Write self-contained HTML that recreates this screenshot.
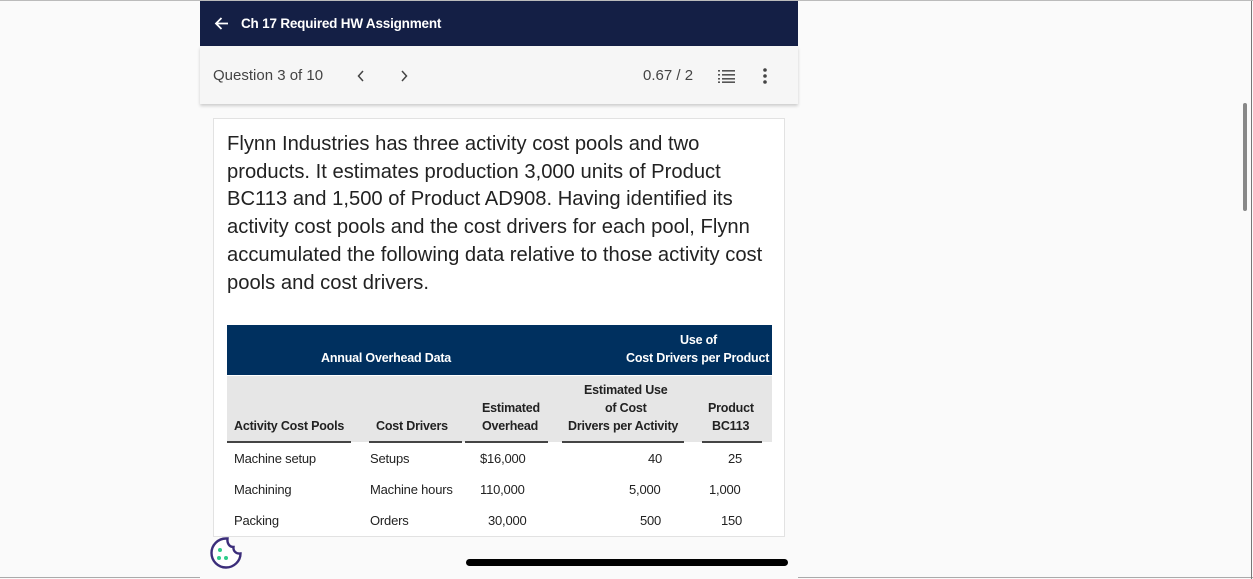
<!DOCTYPE html>
<html><head><style>
*{margin:0;padding:0;box-sizing:border-box}
body{width:1253px;height:578px;background:#fafafa;font-family:"Liberation Sans",sans-serif;position:relative;overflow:hidden;border-top:1px solid #bbb;border-bottom:1px solid #aaa}
.rb{position:absolute;right:1px;top:0;width:1px;height:578px;background:#777}
.sb{position:absolute;left:1243px;top:102px;width:4px;height:108px;background:#888;border-radius:2px}
.col{position:absolute;left:200px;top:0;width:598px;height:578px;background:#fafafa}
.hdr{position:absolute;left:0;top:0;width:598px;height:45px;background:#141f45;color:#fff;font-size:13.5px;font-weight:bold;letter-spacing:-0.2px}
.hdr span{position:absolute;left:41px;top:15px}
.tb{position:absolute;left:0;top:45px;width:598px;height:58px;background:#f6f6f6;box-shadow:0 2px 3px rgba(0,0,0,.18);color:#444;font-size:15px}
.card{position:absolute;left:13px;top:117px;width:572px;height:419px;background:#fff;border:1px solid #e2e2e2}
.p{position:absolute;left:13px;top:12px;width:560px;font-size:20.2px;line-height:27.7px;color:#222;letter-spacing:0;white-space:nowrap}
.t1{position:absolute;left:13px;top:206px;width:545px;height:50px;background:#00305f;color:#fff;font-size:12.5px;font-weight:bold;letter-spacing:-0.2px}
.t2{position:absolute;left:13px;top:257px;width:545px;height:66px;background:#e6e6e6;font-size:12.5px;font-weight:bold;color:#222;letter-spacing:-0.2px}
.a{position:absolute;white-space:nowrap}
.ul{position:absolute;top:65px;height:2px;background:#444}
.r{position:absolute;font-size:13px;color:#222;white-space:nowrap;letter-spacing:-0.2px}
</style></head><body>
<div class="rb"></div><div class="sb"></div>
<div class="col">
<div class="hdr"><svg style="position:absolute;left:14px;top:15px" width="15" height="15" viewBox="0 0 15 15"><path d="M14 7.5H2M7.5 2L2 7.5 7.5 13" stroke="#fff" stroke-width="1.8" fill="none"/></svg><span>Ch 17 Required HW Assignment</span></div>
<div class="tb">
<span class="a" style="left:13px;top:21px">Question 3 of 10</span>
<svg style="position:absolute;left:157px;top:24px" width="8" height="12"><path d="M6 1L1.5 6 6 11" stroke="#444" stroke-width="1.5" fill="none"/></svg>
<svg style="position:absolute;left:200px;top:24px" width="8" height="12"><path d="M2 1L6.5 6 2 11" stroke="#444" stroke-width="1.5" fill="none"/></svg>
<span class="a" style="left:443px;top:21px">0.67 / 2</span>
<svg style="position:absolute;left:518px;top:23px" width="17" height="14"><g fill="#555"><rect x="0" y="1" width="2" height="1.6"/><rect x="4" y="1" width="13" height="1.6"/><rect x="0" y="5" width="2" height="1.6"/><rect x="4" y="5" width="13" height="1.6"/><rect x="0" y="9" width="2" height="1.6"/><rect x="4" y="9" width="13" height="1.6"/><rect x="0" y="12.4" width="2" height="1.6"/><rect x="4" y="12.4" width="13" height="1.6"/></g></svg>
<svg style="position:absolute;left:563px;top:22px" width="4" height="16"><g fill="#444"><circle cx="2" cy="2" r="1.8"/><circle cx="2" cy="8" r="1.8"/><circle cx="2" cy="14" r="1.8"/></g></svg>
</div>
<div class="card">
<div class="p">Flynn Industries has three activity cost pools and two<br>products. It estimates production 3,000 units of Product<br>BC113 and 1,500 of Product AD908. Having identified its<br>activity cost pools and the cost drivers for each pool, Flynn<br>accumulated the following data relative to those activity cost<br>pools and cost drivers.</div>
<div class="t1"><span class="a" style="left:94px;top:26px">Annual Overhead Data</span><span class="a" style="left:453px;top:8px">Use of</span><span class="a" style="left:399px;top:26px">Cost Drivers per Product</span></div>
<div class="t2">
<span class="a" style="left:7px;top:43px">Activity Cost Pools</span>
<span class="a" style="left:149px;top:43px">Cost Drivers</span>
<span class="a" style="left:255px;top:25px">Estimated</span><span class="a" style="left:255px;top:43px">Overhead</span>
<span class="a" style="left:357px;top:7px">Estimated Use</span><span class="a" style="left:378px;top:25px">of Cost</span><span class="a" style="left:341px;top:43px">Drivers per Activity</span>
<span class="a" style="left:481px;top:25px">Product</span><span class="a" style="left:485px;top:43px">BC113</span>
<div class="ul" style="left:0;width:124px"></div><div class="ul" style="left:142px;width:93px"></div><div class="ul" style="left:238px;width:83px"></div><div class="ul" style="left:335px;width:122px"></div><div class="ul" style="left:475px;width:60px"></div>
</div>
<span class="r" style="left:20px;top:332px">Machine setup</span><span class="r" style="left:156px;top:332px">Setups</span><span class="r" style="left:266px;top:332px">$16,000</span><span class="r" style="left:434px;top:332px">40</span><span class="r" style="left:514px;top:332px">25</span>
<span class="r" style="left:20px;top:363px">Machining</span><span class="r" style="left:156px;top:363px">Machine hours</span><span class="r" style="left:266px;top:363px">110,000</span><span class="r" style="left:415px;top:363px">5,000</span><span class="r" style="left:495px;top:363px">1,000</span>
<span class="r" style="left:20px;top:394px">Packing</span><span class="r" style="left:156px;top:394px">Orders</span><span class="r" style="left:274px;top:394px">30,000</span><span class="r" style="left:426px;top:394px">500</span><span class="r" style="left:507px;top:394px">150</span>
</div>
<svg style="position:absolute;left:9px;top:535px" width="35" height="34" viewBox="0 0 35 34"><path d="M17 2.5C9 2.5 2.5 9 2.5 17S9 31.5 17 31.5 31.5 25 31.5 17.5C27 18 24 15 24.5 11 20 11 18 7 18.5 2.5Z" fill="#fff" stroke="#3b2d7a" stroke-width="2.4"/><g fill="#2ecc8a"><circle cx="11" cy="14" r="2"/><circle cx="10" cy="22" r="2"/><circle cx="17" cy="22" r="2"/></g></svg>
<div style="position:absolute;left:266px;top:558px;width:322px;height:7px;background:#000;border-radius:4px"></div>
</div>
</body></html>
